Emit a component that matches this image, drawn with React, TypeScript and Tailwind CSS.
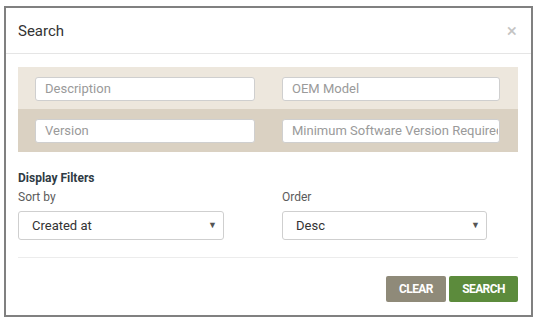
import React from 'react';

const font = { fontFamily: 'Roboto, "Liberation Sans", Arial, sans-serif' };

function TextBox({ placeholder }: { placeholder: string }) {
  return (
    <input
      readOnly
      placeholder={placeholder}
      className="h-[24px] w-full bg-white border border-[#cfcfcf] rounded-[3px] pl-[9px] pr-[1px] text-[13px] text-[#333] placeholder:text-[#9a9a9a] outline-none"
      style={font}
    />
  );
}

function Dropdown({ label, value, width }: { label: string; value: string; width: string }) {
  return (
    <div className="flex flex-col">
      <div className="text-[12px] leading-[14px] text-[#5b5b5b] mb-[7px]">{label}</div>
      <div className={`${width} h-[29px] bg-white border border-[#cfcfcf] rounded-[3px] pl-[13px] pr-[6px] flex items-center justify-between text-[13px] text-[#333]`}>
        <span>{value}</span>
        <span className="text-[9px] text-[#555]">▼</span>
      </div>
    </div>
  );
}

export default function App() {
  return (
    <div className="w-[538px] h-[322px] bg-white pt-[6px] pl-[4px]" style={font}>
      <div className="w-[529px] h-[311px] border-2 border-[#808080] bg-white flex flex-col">
        {/* Header */}
        <div className="h-[46px] border-b border-[#e5e5e5] px-[12px] flex items-center justify-between">
          <span className="text-[15px] text-[#333] mt-[1px]">Search</span>
          <span className="text-[19px] text-[#c4c4c4] mr-[2px] mt-[1px]">×</span>
        </div>

        {/* Body */}
        <div className="px-[12px] pt-[13px]">
          <div className="w-[500px]">
            <div className="bg-[#ede7dd] h-[42px] px-[17px] pt-[1px] grid grid-cols-[220px_218px] gap-[27px] items-center">
              <TextBox placeholder="Description" />
              <TextBox placeholder="OEM Model" />
            </div>
            <div className="bg-[#dad1c2] h-[43px] px-[17px] grid grid-cols-[220px_218px] gap-[27px] items-center">
              <TextBox placeholder="Version" />
              <TextBox placeholder="Minimum Software Version Required" />
            </div>
          </div>

          <div className="mt-[19px] text-[12px] leading-[14px] font-bold text-[#2f3b44]">Display Filters</div>
          <div className="mt-[5px] grid grid-cols-[264px_1fr]">
            <Dropdown label="Sort by" value="Created at" width="w-[206px]" />
            <Dropdown label="Order" value="Desc" width="w-[205px]" />
          </div>

          <div className="mt-[17px] w-[500px] border-t border-[#ececec]"></div>

          <div className="mt-[18px] w-[500px] flex justify-end gap-[3px]">
            <button className="h-[26px] w-[60px] bg-[#8f8a79] rounded-[2px] text-white text-[12px] font-bold tracking-[-0.6px]">
              CLEAR
            </button>
            <button className="h-[26px] w-[69px] bg-[#5c8b3c] rounded-[2px] text-white text-[12px] font-bold tracking-[-0.6px]">
              SEARCH
            </button>
          </div>
        </div>
      </div>
    </div>
  );
}
